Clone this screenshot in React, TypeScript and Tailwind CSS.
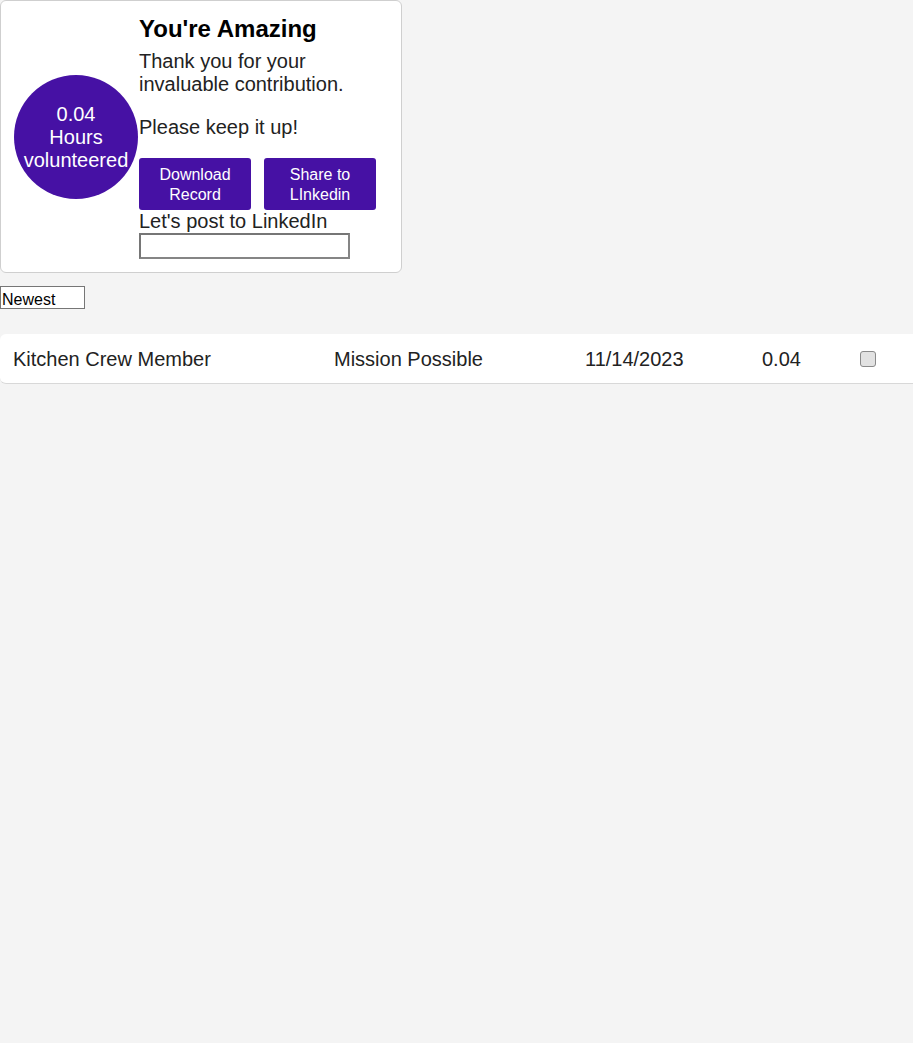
import React from "react";

type Activity = {
  role: string;
  organization: string;
  date: string;
  hours: string;
};

const activities: Activity[] = [
  {
    role: "Kitchen Crew Member",
    organization: "Mission Possible",
    date: "11/14/2023",
    hours: "0.04",
  },
];

const HoursCard = ({ hours }: { hours: string }) => {
  return (
    <div className="flex w-[402px] h-[273px] items-center rounded-md border border-[#cfcfcf] bg-white pl-[13px]">
      <div className="flex h-[124px] w-[124px] shrink-0 flex-col items-center justify-center rounded-full bg-[#4611a4] pt-[2px] text-center text-[20px] leading-[23px] text-white">
        <span>{hours}</span>
        <span>Hours</span>
        <span>volunteered</span>
      </div>
      <div className="ml-[1px] flex h-full flex-col pt-[14px]">
        <h2 className="text-[24px] font-bold leading-[28px] text-black">
          You're Amazing
        </h2>
        <p className="mt-[7px] w-[220px] text-[20px] leading-[23px] text-[#222]">
          Thank you for your invaluable contribution.
        </p>
        <p className="mt-[20px] text-[20px] leading-[23px] text-[#222]">
          Please keep it up!
        </p>
        <div className="mt-[19px] flex gap-[13px]">
          <button className="h-[52px] w-[112px] rounded-[3px] bg-[#4611a4] pt-[2px] text-[16px] leading-[20px] text-white">
            Download
            <br />
            Record
          </button>
          <button className="h-[52px] w-[112px] rounded-[3px] bg-[#4611a4] pt-[2px] text-[16px] leading-[20px] text-white">
            Share to
            <br />
            LInkedin
          </button>
        </div>
        <label className="text-[20px] leading-[23px] text-[#222]">
          Let's post to LinkedIn
        </label>
        <input
          type="text"
          className="h-[26px] w-[211px] border-2 border-t-[#767676] border-l-[#767676] border-r-[#858585] border-b-[#858585] bg-white"
        />
      </div>
    </div>
  );
};

export default function App() {
  return (
    <div
      className="min-h-[1043px] bg-[#f4f4f4] text-[#222]"
      style={{ fontFamily: '"Liberation Sans", Arial, sans-serif' }}
    >
      <HoursCard hours="0.04" />

      <select className="mt-[13px] block h-[23px] w-[85px] appearance-none border border-[#767676] bg-white pl-[1px] pt-[5px] text-[16px] leading-[16px] text-black">
        <option>Newest</option>
        <option>Oldest</option>
      </select>

      <div className="mt-[25px]">
        {activities.map((a) => (
          <div
            key={a.role + a.date}
            className="flex h-[50px] items-center rounded-l-md border-b border-[#d8d8d8] bg-white pl-[13px] pt-[1px] text-[20px] leading-[23px] text-[#222]"
          >
            <span className="w-[321px] shrink-0">{a.role}</span>
            <span className="w-[251px] shrink-0">{a.organization}</span>
            <span className="w-[177px] shrink-0">{a.date}</span>
            <span className="w-[98px] shrink-0">{a.hours}</span>
            <input
              type="checkbox"
              className="h-4 w-4 appearance-none rounded-[3px] border border-[#8a8a8a] bg-[#e2e2e2]"
            />
          </div>
        ))}
      </div>
    </div>
  );
}
